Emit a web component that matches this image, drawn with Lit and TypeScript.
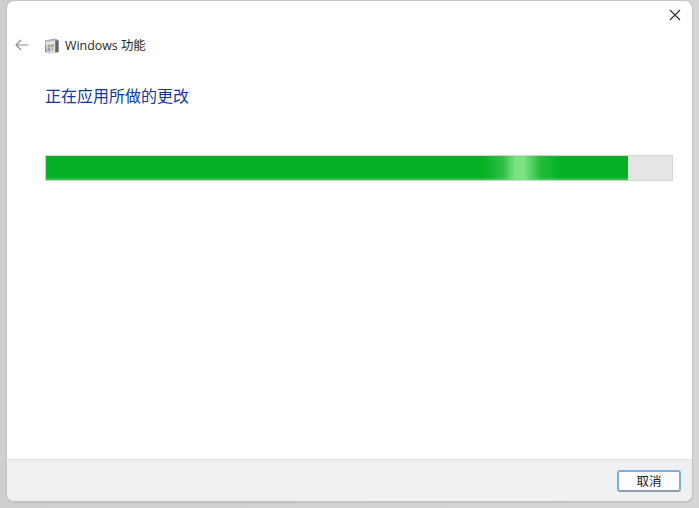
import { LitElement, html, css } from "lit";
import { customElement } from "lit/decorators.js";

@customElement("app-root")
export class AppRoot extends LitElement {
  static styles = css`
    :host { display: block; width: 699px; height: 508px; overflow: hidden; background: #d6d6d6; font-family: "Noto Sans", "Noto Sans CJK SC", sans-serif; }
    .page { height: 508px; box-sizing: border-box; display: flex; flex-direction: column; background: linear-gradient(90deg, #cfcfcf 0, #d6d6d6 100%); }
    .strip { height: 1px; flex: none; display: flex; padding-left: 155px; }
    .strip i { display: block; height: 1px; }
    .s1 { width: 26px; background: #7c7f97; }
    .s2 { width: 78px; background: #3c3a3c; }
    .s3 { width: 36px; background: #2d6fb0; }
    .s4 { width: 92px; background: #4b8fc0; }
    .window { flex: none; width: 685px; height: 500px; margin-left: 7px; box-sizing: border-box; background: #fff; border-radius: 7px; box-shadow: 0 0 0 1px #c2c2c2, 0 1px 2px #9a9a9a; display: flex; flex-direction: column; overflow: hidden; }
    .main { flex: 1; min-height: 0; display: flex; flex-direction: column; }
    .close { align-self: flex-end; display: flex; margin: 8px 11px 0 0; }
    .close svg { width: 12px; height: 12px; display: block; }
    .nav { display: flex; align-items: center; margin: 14px 0 0 8px; height: 20px; }
    .back { width: 14px; height: 12px; display: block; }
    .app-icon { width: 16px; height: 17px; margin: 0 5px 0 15px; display: block; flex: none; }
    .nav-title { font-family: "Open Sans", "Noto Sans CJK SC", sans-serif; font-size: 12.4px; color: #1f1f1f; white-space: nowrap; }
    h1 { margin: 29px 0 0 38px; font-family: "Noto Sans CJK SC", sans-serif; font-weight: 400; font-size: 16px; line-height: 22px; color: #0d3a9c; }
    .bar { margin: 49px 0 0 38px; width: 628px; height: 26px; box-sizing: border-box; background: #e5e5e5; border: 1px solid #d3d3d3; }
    .fill { position: relative; height: 100%; width: 582px; background: linear-gradient(180deg, #2aa53c 0, #06b025 6%, #06b025 88%, #3cc754 100%); overflow: hidden; }
    .glow { position: absolute; left: 438px; top: 0; bottom: 0; width: 76px; background: linear-gradient(90deg, rgba(120,226,130,0) 0, rgba(120,226,130,.35) 25%, rgba(130,232,135,.95) 42%, rgba(130,232,135,.95) 52%, rgba(120,226,130,.25) 74%, rgba(120,226,130,0) 100%); }
    .footer { flex: none; height: 42px; box-sizing: border-box; background: #f0f0f0; border-top: 1px solid #e3e3e3; display: flex; justify-content: flex-end; align-items: center; padding: 0 11px 0 0; }
    .btn { width: 64px; height: 22px; box-sizing: border-box; padding: 0; background: #fdfdfd; border: 2px solid #7aaed8; border-bottom-color: #8a9fb2; border-radius: 3px; font-family: "Noto Sans CJK SC", sans-serif; font-size: 12.5px; line-height: 18px; color: #222; }
  `;

  render() {
    return html`
      <div class="page">
        <div class="strip"><i class="s1"></i><i class="s2"></i><i class="s3"></i><i class="s4"></i></div>
        <div class="window">
          <div class="main">
            <div class="close">
              <svg viewBox="0 0 12 12"><path d="M1 1L11 11M11 1L1 11" stroke="#2a2a2a" stroke-width="1.1" fill="none"/></svg>
            </div>
            <div class="nav">
              <svg class="back" viewBox="0 0 14 12"><path d="M13.5 6H1M6 1L1 6L6 11" stroke="#8f8f8f" stroke-width="1.2" fill="none"/></svg>
              <svg class="app-icon" viewBox="0 0 16 17">
                <path d="M1 3.5L11 1.5L14.5 3V15L5 16.5L1 15Z" fill="#8e9498"/>
                <path d="M1.5 4.5L11 3V15.5L3 16Z" fill="#e6e8e8"/>
                <path d="M3.5 7.5H6.5V10.5H3.5Z" fill="#93ab88"/>
                <path d="M7 7H10V10.5H7Z" fill="#c4a78c"/>
                <path d="M3.5 11H6.5V14.5H3.5Z" fill="#8aa2bf"/>
                <path d="M7 11H10V14H7Z" fill="#cfc08e"/>
                <path d="M11.5 3V15.5L14.5 15V3.5Z" fill="#5f6468"/>
                <path d="M2 3.6L11 2L14 3.2L4 5Z" fill="#b5bbbe"/>
              </svg>
              <span class="nav-title">Windows 功能</span>
            </div>
            <h1>正在应用所做的更改</h1>
            <div class="bar"><div class="fill"><div class="glow"></div></div></div>
          </div>
          <div class="footer"><button class="btn">取消</button></div>
        </div>
      </div>
    `;
  }
}
